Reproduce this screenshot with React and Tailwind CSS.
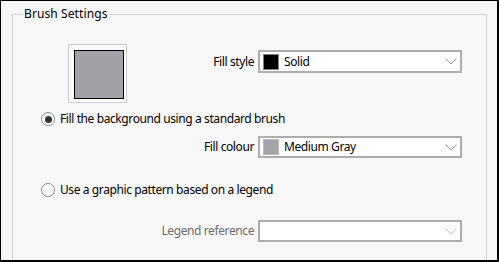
const Chevron = ({ light }) => (
  <svg width="12" height="7" viewBox="0 0 12 7" className="shrink-0">
    <polyline
      points="0.5,0.5 6,6 11.5,0.5"
      fill="none"
      stroke={light ? "#c0c0c0" : "#9a9a9a"}
      strokeWidth="1"
    />
  </svg>
);

const Dropdown = ({ swatch, swatchBorder, label, disabled, h = "h-[22px]" }) => (
  <div className={`w-[204px] ${h} border-2 border-[#adadad] bg-white flex items-center pl-[3px] pr-[3px]`}>
    {swatch && (
      <div
        className={`w-[16px] h-[16px] border ${swatchBorder} ${swatch} shrink-0 mr-[5px]`}
      ></div>
    )}
    <span className="flex-1 text-black">{label}</span>
    <Chevron light={disabled} />
  </div>
);

const Radio = ({ checked, label }) => (
  <div className="flex items-center h-[16px] pl-[28px]">
    <div className="w-[14px] h-[14px] rounded-full border border-[#8a8a8a] bg-white flex items-center justify-center shrink-0">
      {checked && <div className="w-[7px] h-[7px] rounded-full bg-[#333]"></div>}
    </div>
    <span className="ml-[5px] text-black">{label}</span>
  </div>
);

const App = () => {
  return (
    <div
      className="w-[499px] h-[262px] bg-[#f7f7f7] border-l border-t border-r-2 border-b-2 border-black overflow-hidden text-[12px] leading-[16px] tracking-[-0.4px]"
      style={{ fontFamily: '"Noto Sans", "Open Sans", sans-serif' }}
    >
      <fieldset className="ml-[11px] mt-[5px] w-[475px] h-[280px] border border-[#d3d3d3]">
        <legend className="ml-[10px] px-[1px] text-black tracking-[0.1px]">Brush Settings</legend>

        <div className="flex items-start pl-[55px] pt-[22px]">
          <div className="w-[59px] h-[59px] border border-[#cdcdcd] bg-[#f9f9f9] p-[5px] shrink-0">
            <div className="w-[50px] h-[49px] border border-black bg-[#a2a1a6]"></div>
          </div>
          <div className="flex items-center mt-[6px]">
            <span className="w-[131px] pr-[4px] text-right text-black">Fill style</span>
            <Dropdown swatch="bg-black" swatchBorder="border-[#808080]" label="Solid" h="h-[23px]" />
          </div>
        </div>

        <div className="mt-[8px]">
          <Radio checked label="Fill the background using a standard brush" />
        </div>

        <div className="flex items-center mt-[9px]">
          <span className="w-[245px] pr-[4px] text-right text-black">Fill colour</span>
          <Dropdown swatch="bg-[#a4a3a8]" swatchBorder="border-[#b8b8b8]" label="Medium Gray" />
        </div>

        <div className="mt-[24px]">
          <Radio label="Use a graphic pattern based on a legend" />
        </div>

        <div className="flex items-center mt-[22px]">
          <span className="w-[245px] pr-[4px] text-right text-[#6d6d6d]">Legend reference</span>
          <Dropdown label="" disabled />
        </div>
      </fieldset>
    </div>
  );
};

export default App;
